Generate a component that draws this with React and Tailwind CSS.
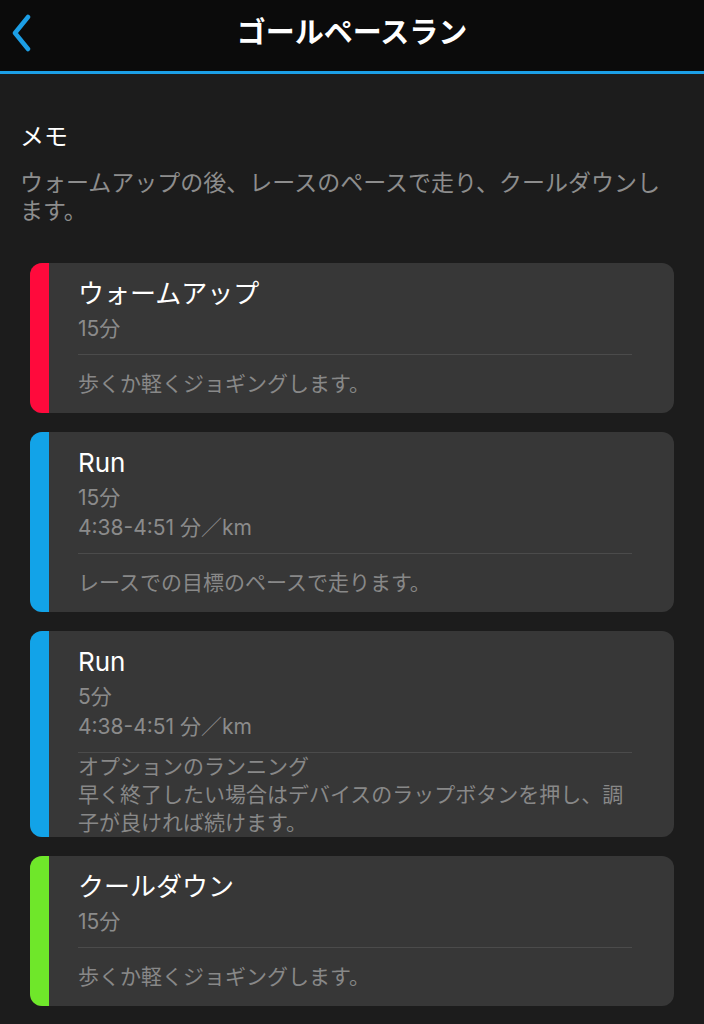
import React from "react";

const steps = [
  {
    color: "bg-[#ff0a3c]",
    title: "ウォームアップ",
    details: ["15分"],
    note: ["歩くか軽くジョギングします。"],
  },
  {
    color: "bg-[#12a3e8]",
    title: "Run",
    details: ["15分", "4:38-4:51 分／km"],
    note: ["レースでの目標のペースで走ります。"],
  },
  {
    color: "bg-[#12a3e8]",
    title: "Run",
    details: ["5分", "4:38-4:51 分／km"],
    note: ["オプションのランニング", "早く終了したい場合はデバイスのラップボタンを押し、調子が良ければ続けます。"],
  },
  {
    color: "bg-[#6fe72a]",
    title: "クールダウン",
    details: ["15分"],
    note: ["歩くか軽くジョギングします。"],
  },
];

function StepCard({ step }) {
  return (
    <div className="flex overflow-hidden rounded-[12px] bg-[#373737]">
      <div className={`w-[19px] shrink-0 ${step.color}`} />
      <div className="flex-1 pl-[29px] pr-[42px] pt-[14px]">
        <div className="text-[26px] leading-[34px] text-white">{step.title}</div>
        <div className="mt-[3px] text-[21px] leading-[30px] text-[#8b8b8b]">
          {step.details.map((d, i) => (
            <div key={i}>{d}</div>
          ))}
        </div>
        <div className="mt-[10px] h-px bg-[#4b4b4b]" />
        <div className="flex min-h-[58px] flex-col justify-center pr-[4px] text-[21px] leading-[28px] text-[#888888]">
          {step.note.map((n, i) => (
            <div key={i}>{n}</div>
          ))}
        </div>
      </div>
    </div>
  );
}

export default function App() {
  return (
    <div className="min-h-screen w-full bg-[#1c1c1c] font-['Inter','Noto_Sans_CJK_JP',sans-serif]">
      {/* header */}
      <div className="grid h-[74px] grid-cols-[1fr_auto_1fr] items-center border-b-[3px] border-[#1c9fe6] bg-[#0b0b0b] pb-[6px]">
        <div className="pl-[11px]">
          <svg width="22" height="38" viewBox="0 0 22 38" fill="none">
            <polyline
              points="17,3 4,19 17,35"
              stroke="#1c9fe6"
              strokeWidth="4.5"
              strokeLinecap="round"
              strokeLinejoin="round"
            />
          </svg>
        </div>
        <h1 className="text-[29px] font-bold text-white">ゴールペースラン</h1>
        <div />
      </div>

      {/* memo */}
      <div className="pl-5 pr-[34px] pt-[47px]">
        <div className="text-[24px] leading-[32px] text-white">メモ</div>
        <p className="mt-4 text-[23px] leading-[28px] text-[#8d8d8d]">
          ウォームアップの後、レースのペースで走り、クールダウンします。
        </p>
      </div>

      {/* steps */}
      <div className="flex flex-col gap-[19px] px-[30px] pt-[38px] pb-[19px]">
        {steps.map((s, i) => (
          <StepCard key={i} step={s} />
        ))}
      </div>
    </div>
  );
}
